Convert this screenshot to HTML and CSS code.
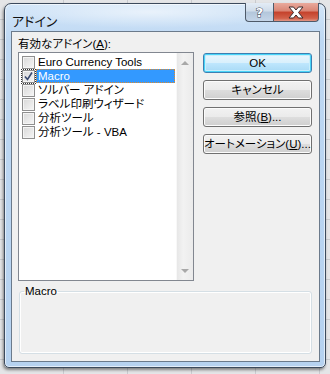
FILE: index.html
```html
<!DOCTYPE html>
<html lang="ja">
<head>
  <meta charset="UTF-8"/>
  <title>アドイン</title>
  <link rel="stylesheet" href="styles.css">
</head>
<body>
  <div class="window">
    <div class="titlebar">
      <span class="title">アドイン</span>
      <div class="caption-buttons">
        <div class="cap help"><span>?</span></div>
        <div class="cap close">
          <svg width="20" height="13" viewBox="0 0 20 13">
            <path d="M3 1h4.5l2.5 3 2.5-3H17l-4.5 5.5L17 12h-4.5L10 9l-2.5 3H3l4.5-5.5z" fill="#fff" stroke="#3b2a2a" stroke-width="1" stroke-linejoin="round"/>
          </svg>
        </div>
      </div>
    </div>

    <div class="client">
      <div class="label">有効なアドイン(<u>A</u>):</div>
      <div class="main-row">
        <div class="listbox">
          <ul class="items">
            <li class="item"><span class="box"></span><span class="text">Euro Currency Tools</span></li>
            <li class="item active"><span class="box checked">
              <svg width="11" height="11" viewBox="0 0 11 11"><path d="M2 5.5l2.5 3L9 1.5" fill="none" stroke="#3a4a70" stroke-width="1.6"/></svg>
            </span><span class="text">Macro</span></li>
            <li class="item"><span class="box"></span><span class="text">ソルバー アドイン</span></li>
            <li class="item"><span class="box"></span><span class="text">ラベル印刷ウィザード</span></li>
            <li class="item"><span class="box"></span><span class="text">分析ツール</span></li>
            <li class="item"><span class="box"></span><span class="text">分析ツール - VBA</span></li>
          </ul>
          <div class="scrollbar">
            <span class="arrow up"></span>
            <span class="arrow down"></span>
          </div>
        </div>

        <div class="buttons">
          <button class="btn default">OK</button>
          <button class="btn">キャンセル</button>
          <button class="btn">参照(<u>B</u>)...</button>
          <button class="btn">オートメーション(<u>U</u>)...</button>
        </div>
      </div>

      <fieldset class="group">
        <legend>Macro</legend>
      </fieldset>
    </div>
  </div>
</body>
</html>
```

FILE: styles.css
```css
* { box-sizing: border-box; margin: 0; padding: 0; }

body {
  width: 330px;
  height: 374px;
  padding: 3px 4px;
  overflow: hidden;
  font-family: "Liberation Sans", "Noto Sans CJK JP", sans-serif;
  font-size: 11.5px;
  font-feature-settings: "palt";
  color: #000;
  background-color: #e4e5e7;
  background-image:
    repeating-linear-gradient(180deg, transparent 0 19px, #c9cbcf 19px 20px),
    repeating-linear-gradient(90deg, transparent 0 63px, #c9cbcf 63px 64px);
}

.window {
  width: 322px;
  height: 365px;
  display: flex;
  flex-direction: column;
  padding: 0 5px 5px 6px;
  border: 1px solid #3c4a5c;
  border-radius: 7px 7px 5px 5px;
  background: linear-gradient(180deg, #d2e5f8 0%, #bed8f3 10%, #b6d2f0 100%);
  box-shadow: -1px 2px 3px rgba(0,0,0,0.45), inset 0 0 0 1px rgba(255,255,255,0.6);
}

.titlebar {
  height: 27px;
  display: flex;
  align-items: flex-start;
  background: radial-gradient(ellipse at 45% 30%, rgba(255,255,255,0.55), transparent 60%);
}

.title {
  margin: 9px 0 0 1px;
  font-family: "Noto Sans CJK JP", sans-serif;
  font-size: 13px;
  line-height: 16px;
  color: #111;
}

.caption-buttons {
  margin: -1px 1px 0 auto;
  display: flex;
}

.cap {
  height: 19px;
  display: flex;
  align-items: center;
  justify-content: center;
  border: 1px solid #4e5a69;
  border-top: none;
}

.help {
  width: 28px;
  border-radius: 0 0 0 4px;
  border-right: none;
  background: linear-gradient(180deg, #e3ecf6 0%, #cfdcea 45%, #b3c6db 50%, #c4d5e8 100%);
}

.help span {
  font-family: "DejaVu Sans", sans-serif;
  font-weight: bold;
  font-size: 13px;
  color: #fff;
  -webkit-text-stroke: 1px #3a4658;
  paint-order: stroke fill;
}

.close {
  width: 46px;
  border-radius: 0 0 4px 0;
  background: linear-gradient(180deg, #e9aa9c 0%, #d98473 45%, #c4412b 50%, #d2614a 85%, #e29786 100%);
}

.client {
  flex: 1;
  border: 1px solid #6b7a8b;
  background: #f0f0f0;
  padding: 4px 7px 0 6px;
}

.label {
  height: 16px;
  line-height: 16px;
}

.main-row {
  display: flex;
  gap: 9px;
}

.listbox {
  width: 176px;
  height: 229px;
  display: flex;
  border: 1px solid #828790;
  background: #fff;
}

.items {
  flex: 1;
  list-style: none;
  padding-top: 2px;
}

.item {
  height: 14px;
  display: flex;
  align-items: center;
  padding-left: 3px;
  white-space: nowrap;
}

.box {
  width: 13px;
  height: 13px;
  flex: none;
  border: 1px solid #8f8f8f;
  background: linear-gradient(135deg, #d8d8d8, #f6f6f6);
  box-shadow: inset 0 0 0 1px #f4f4f4;
  display: flex;
  align-items: center;
  justify-content: center;
}

.box.checked {
  outline: 1px dotted #333;
  outline-offset: 0;
}

.text {
  flex: 1;
  height: 14px;
  line-height: 14px;
  padding-left: 2px;
  margin-left: 1px;
  margin-right: 1px;
}

.item.active .text {
  background: #3399ff;
  color: #fff;
  outline: 1px dotted #e08a2a;
  outline-offset: -1px;
}

.scrollbar {
  width: 17px;
  flex: none;
  display: flex;
  flex-direction: column;
  justify-content: space-between;
  align-items: center;
  padding: 8px 0 7px;
  background: linear-gradient(90deg, #e7e7e7, #f2f2f2 40%, #ebebeb);
  border-left: 1px solid #f8f8f8;
}

.arrow {
  width: 0;
  height: 0;
  border-left: 4px solid transparent;
  border-right: 4px solid transparent;
}

.arrow.up { border-bottom: 4px solid #a8a8a8; }
.arrow.down { border-top: 4px solid #a8a8a8; }

.buttons {
  margin-top: 1px;
  display: flex;
  flex-direction: column;
  gap: 7px;
}

.btn {
  width: 109px;
  height: 20px;
  padding: 0;
  white-space: nowrap;
  font: inherit;
  font-feature-settings: "palt";
  line-height: 18px;
  color: #000;
  border: 1px solid #707070;
  border-radius: 3px;
  background: linear-gradient(180deg, #f2f2f2 0%, #ebebeb 48%, #dddddd 52%, #cfcfcf 100%);
  box-shadow: inset 0 0 0 1px #fcfcfc;
}

.btn.default {
  border-color: #3c7fb1;
  box-shadow: inset 0 0 0 1px #48d4f8, inset 0 0 0 2px #c8eefb;
  background: linear-gradient(180deg, #eaf6fd 0%, #d9f0fc 48%, #bee6fd 52%, #a7d9f5 100%);
}

.group {
  margin: 3px 0 0 1px;
  width: 293px;
  height: 70px;
  border: 1px solid #d5dfe5;
  border-radius: 3px;
  box-shadow: inset 0 0 0 1px #fff;
  padding: 0 4px;
}

.group legend {
  padding: 0 1px;
  margin-left: 0;
  line-height: 14px;
}
```
